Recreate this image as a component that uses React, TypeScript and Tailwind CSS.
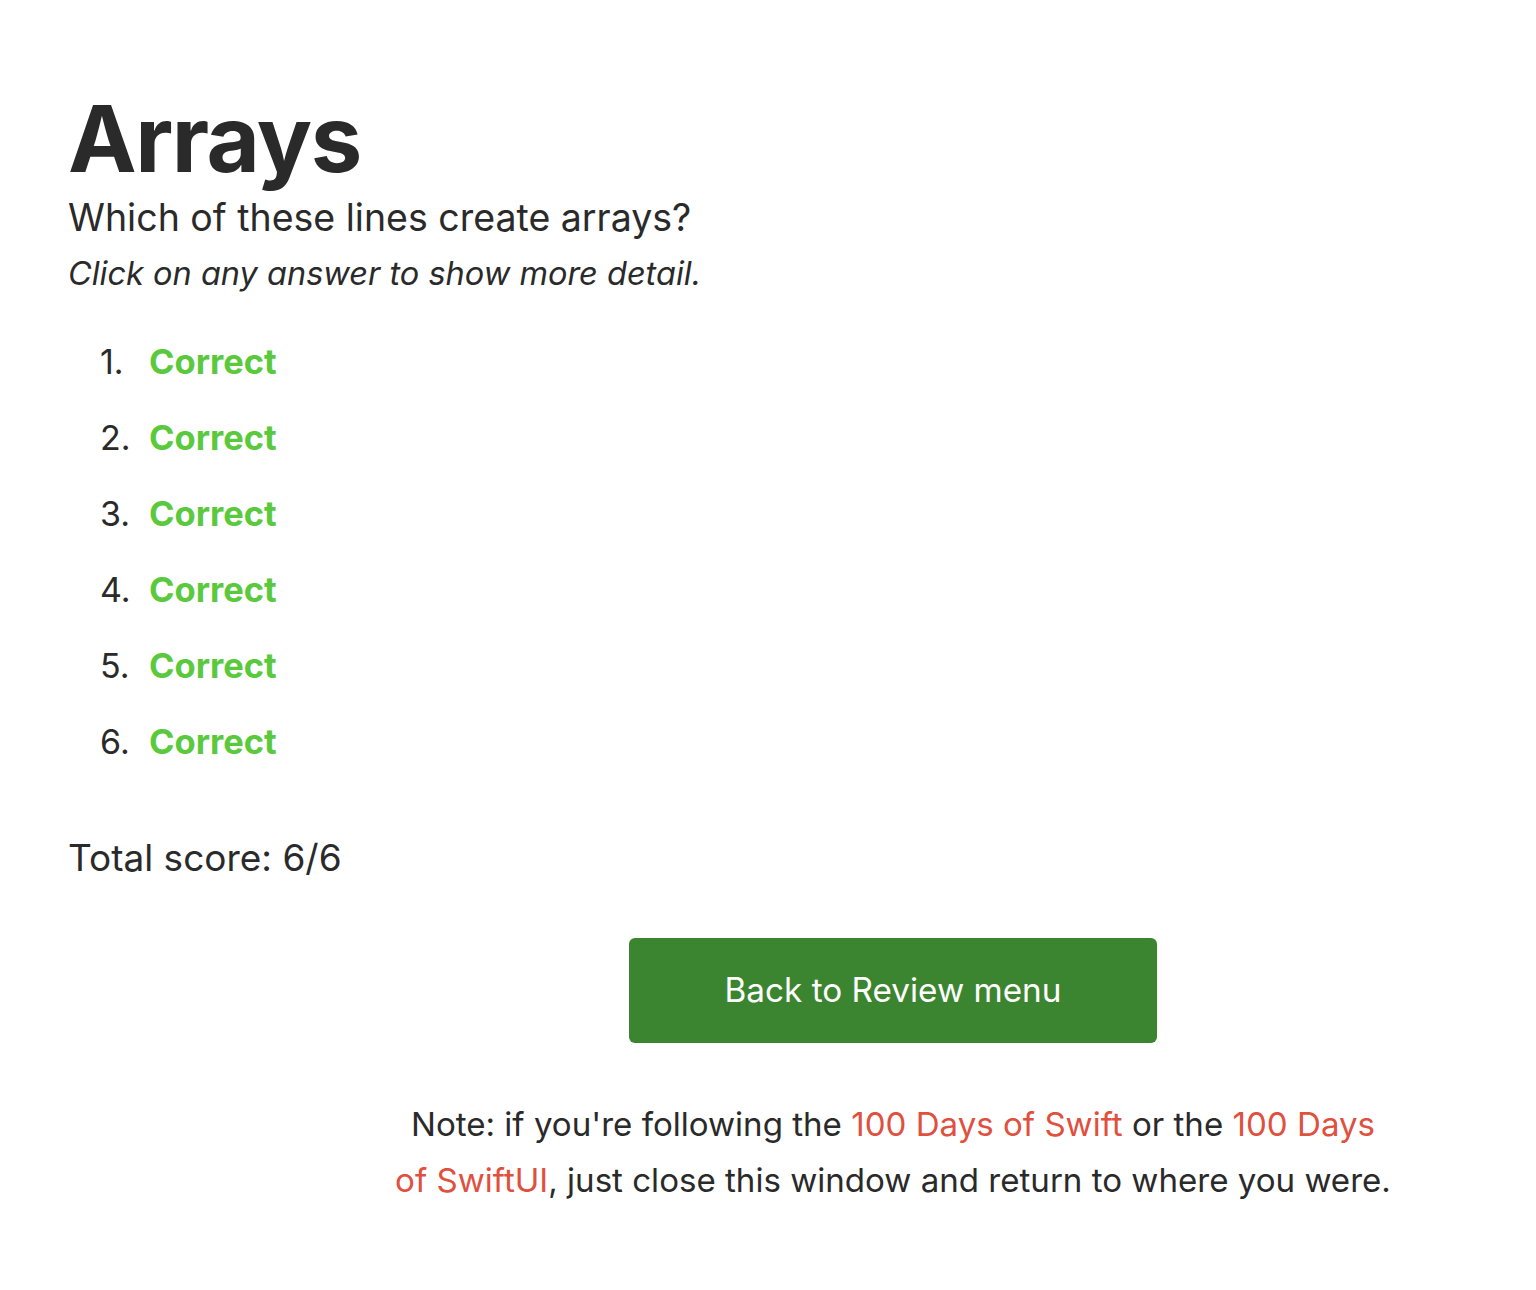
export default function App() {
  const answers = [1, 2, 3, 4, 5, 6];

  return (
    <div className="min-h-[1290px] bg-white text-[#2a2a2a]" style={{ fontFamily: 'Inter, "Noto Sans", sans-serif' }}>
      <div className="pl-[68px] pt-[84px]">
        <h1 className="text-[92px] font-bold leading-[110px] tracking-[-1.5px]">Arrays</h1>
        <h2 className="text-[37.5px] leading-[48px]">Which of these lines create arrays?</h2>
        <p className="text-[32.5px] italic leading-[48px] mt-[8px]">Click on any answer to show more detail.</p>

        <ol className="mt-[26px] pl-[32px]">
          {answers.map((n) => (
            <li key={n} className="flex items-baseline h-[76px] text-[34px] leading-[76px]">
              <span className="w-[49px]">{n}.</span>
              <span className="font-bold text-[#5bc93d] text-[34.5px]">Correct</span>
            </li>
          ))}
        </ol>

        <p className="text-[37px] leading-[48px] mt-[54px]">Total score: 6/6</p>
      </div>

      <div className="ml-[393px] w-[1000px] flex flex-col items-center mt-[56px]">
        <button className="w-[528px] h-[105px] rounded-[6px] bg-[#3b8530] text-white text-[33.3px]">
          Back to Review menu
        </button>
        <p className="mt-[53px] text-center text-[33.1px] leading-[56px]">
          Note: if you're following the <span className="text-[#e0503e]">100 Days of Swift</span> or the{' '}
          <span className="text-[#e0503e]">100 Days of SwiftUI</span>, just close this window and return to where you were.
        </p>
      </div>
    </div>
  );
}
